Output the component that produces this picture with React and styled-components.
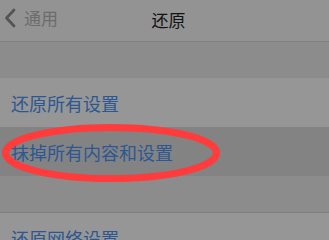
import React from "react";
import styled, { createGlobalStyle } from "styled-components";

const GlobalStyle = createGlobalStyle`
  html, body {
    margin: 0;
    padding: 0;
    background: #8d8d8d;
  }
  body {
    font-family: "Noto Sans CJK SC", "Noto Sans", sans-serif;
  }
`;

const App = () => {
  return (
    <Screen>
      <GlobalStyle />
      <NavBar>
        <BackButton>
          <svg width="12" height="20" viewBox="0 0 12 20">
            <path d="M10 2 L2.5 10 L10 18" fill="none" stroke="#545454" strokeWidth="2.8" strokeLinecap="round" strokeLinejoin="round" />
          </svg>
          <BackLabel>通用</BackLabel>
        </BackButton>
        <Title>还原</Title>
      </NavBar>
      <Spacer />
      <Row>
        <RowText>还原所有设置</RowText>
      </Row>
      <Row $active>
        <RowText>抹掉所有内容和设置</RowText>
      </Row>
      <Spacer $bottomLine />
      <Row>
        <RowText>还原网络设置</RowText>
      </Row>
      <Mark width="329" height="240" viewBox="0 0 329 240">
        <ellipse cx="111" cy="153" rx="105.5" ry="25.5" fill="none" stroke="#ff3b3b" strokeWidth="7" />
      </Mark>
    </Screen>
  );
};

const Screen = styled.div`
  position: relative;
  width: 329px;
  height: 240px;
  overflow: hidden;
  display: flex;
  flex-direction: column;
  background: #8d8d8d;
`;
const NavBar = styled.div`
  position: relative;
  height: 41px;
  flex-shrink: 0;
  display: flex;
  align-items: center;
  justify-content: center;
  background: #939393;
  border-bottom: 1px solid #7f7f7f;
`;
const BackButton = styled.div`
  position: absolute;
  left: 4px;
  top: 8px;
  display: flex;
  align-items: center;
  gap: 8px;
`;
const BackLabel = styled.span`
  font-size: 17px;
  color: #6c6c6c;
  line-height: 20px;
`;
const Title = styled.span`
  margin-left: 8px;
  margin-bottom: 2px;
  font-size: 17px;
  color: #121212;
  line-height: 20px;
`;
const Spacer = styled.div`
  height: ${(p) => (p.$bottomLine ? "36px" : "36px")};
  flex-shrink: 0;
  background: #8c8c8c;
  border-bottom: ${(p) => (p.$bottomLine ? "1px solid #7f7f7f" : "none")};
`;
const Row = styled.div`
  height: 49px;
  flex-shrink: 0;
  display: flex;
  align-items: center;
  padding-left: 11px;
  background: ${(p) => (p.$active ? "#838383" : "#969696")};
`;
const RowText = styled.span`
  font-size: 18px;
  line-height: 22px;
  color: #2d5792;
`;
const Mark = styled.svg`
  position: absolute;
  left: 0;
  top: 0;
  pointer-events: none;
`;

export default App;
